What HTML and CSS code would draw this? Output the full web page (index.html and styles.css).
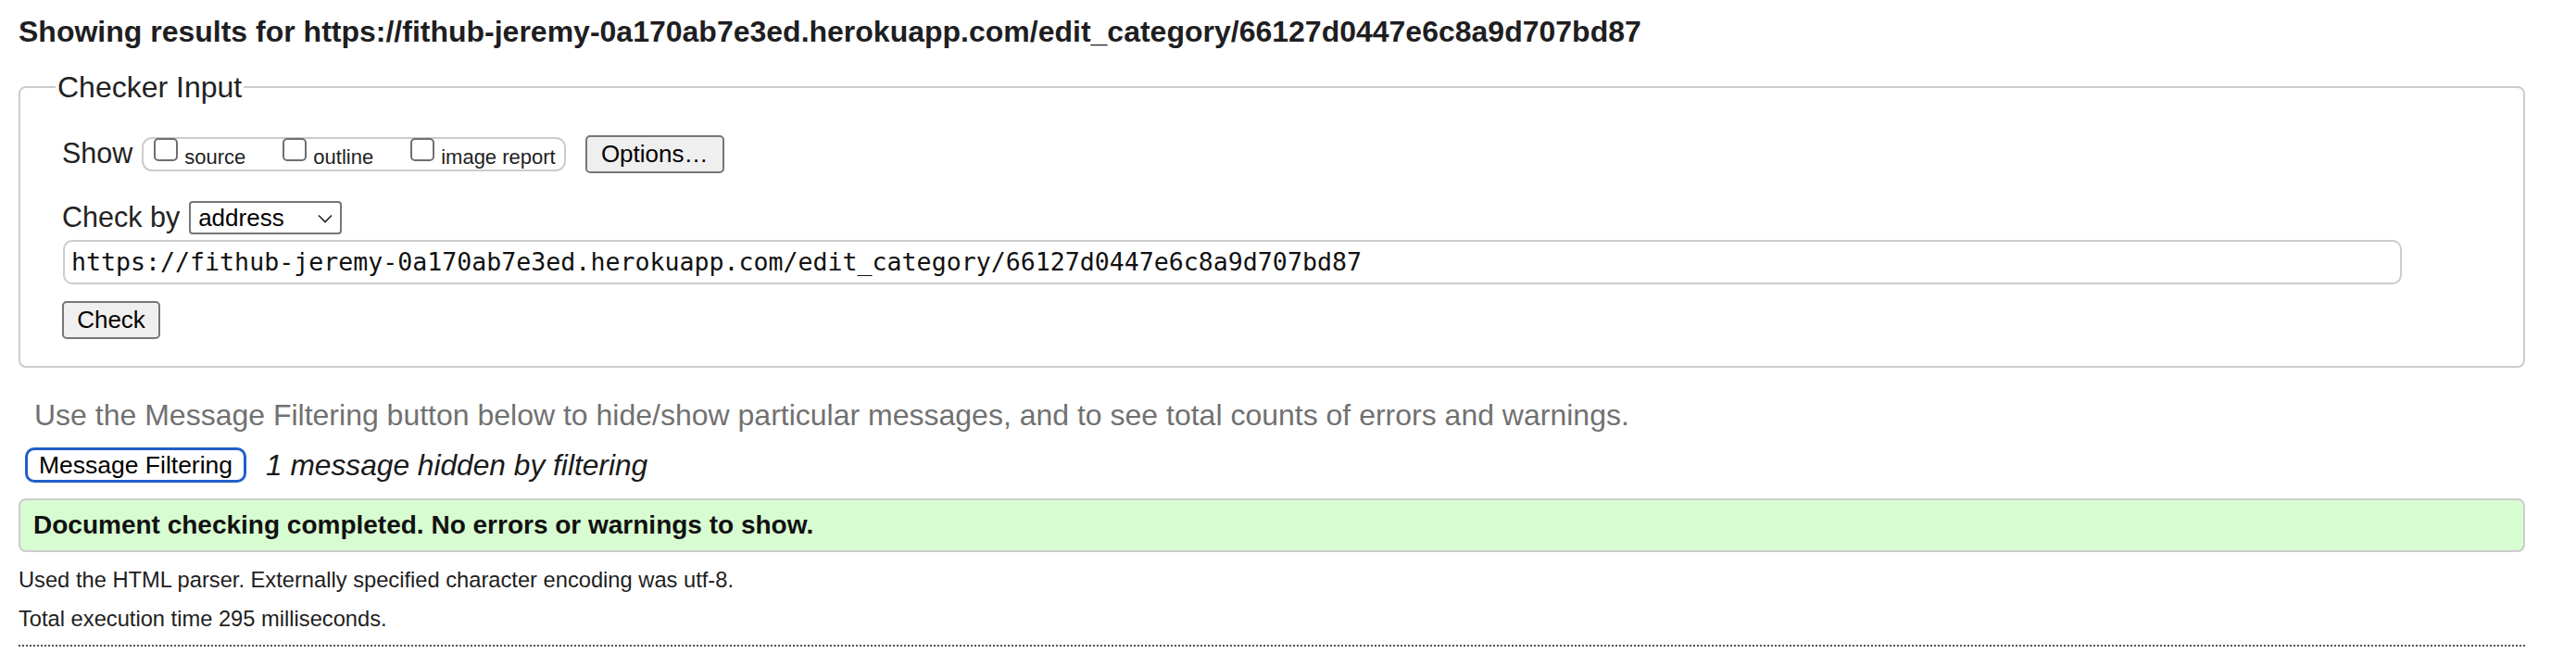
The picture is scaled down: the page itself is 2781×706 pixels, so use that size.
FILE: index.html
```html
<!DOCTYPE html>
<html lang="en">
<head>
<meta charset="utf-8">
<title>Nu Html Checker</title>
<link rel="stylesheet" href="styles.css">
</head>
<body>
<div class="page">
  <h2 class="title">Showing results for https://fithub-jeremy-0a170ab7e3ed.herokuapp.com/edit_category/66127d0447e6c8a9d707bd87</h2>

  <fieldset class="checker">
    <legend class="legend">Checker Input</legend>

    <div class="row show-row">
      <span class="lbl show-lbl">Show</span>
      <div class="pill">
        <label class="opt"><span class="box"></span><span class="opt-text">source</span></label>
        <label class="opt"><span class="box"></span><span class="opt-text">outline</span></label>
        <label class="opt"><span class="box"></span><span class="opt-text">image report</span></label>
      </div>
      <button class="btn options-btn">Options…</button>
    </div>

    <div class="row checkby-row">
      <span class="lbl checkby-lbl">Check by</span>
      <div class="select">
        <span class="select-text">address</span>
        <svg class="chev" width="16" height="10" viewBox="0 0 16 10"><path d="M1 1.5 L8 8.5 L15 1.5" fill="none" stroke="#222" stroke-width="1.6"/></svg>
      </div>
    </div>

    <div class="url">https://fithub-jeremy-0a170ab7e3ed.herokuapp.com/edit_category/66127d0447e6c8a9d707bd87</div>

    <button class="btn check-btn">Check</button>
  </fieldset>

  <p class="hint">Use the Message Filtering button below to hide/show particular messages, and to see total counts of errors and warnings.</p>

  <div class="filter-row">
    <button class="filter-btn">Message Filtering</button>
    <span class="hidden-note">1 message hidden by filtering</span>
  </div>

  <div class="success">Document checking completed. No errors or warnings to show.</div>

  <p class="meta meta-first">Used the HTML parser. Externally specified character encoding was utf-8.</p>
  <p class="meta meta-second">Total execution time 295 milliseconds.</p>
  <div class="dotted"></div>
</div>
</body>
</html>
```

FILE: styles.css
```css
* { box-sizing: border-box; }

html, body {
  margin: 0;
  padding: 0;
  background: #ffffff;
}

body {
  font-family: "Liberation Sans", Arial, sans-serif;
  color: #222222;
}

.page {
  width: 2706px;
  margin-left: 20px;
  padding-top: 16px;
}

.title {
  margin: 0;
  font-size: 32px;
  line-height: 36px;
  font-weight: bold;
  color: #1e1e22;
  white-space: nowrap;
}

.checker {
  margin: 24px 0 0 0;
  border: 2px solid #cccccc;
  border-radius: 8px;
  padding: 0 0 29px 38px;
  min-width: 0;
}

.legend {
  font-size: 32px;
  line-height: 36px;
  padding: 0 2px;
  color: #222;
}

.row {
  display: flex;
  align-items: center;
  margin-left: 7px;
}

.lbl {
  font-size: 30.5px;
  line-height: 34px;
  margin-right: 10px;
  white-space: nowrap;
}

.show-lbl { margin-top: -4px; }
.checkby-lbl { margin-top: -2px; }

.show-row {
  margin-top: 34px;
  height: 41px;
}

.pill {
  display: flex;
  align-items: flex-start;
  height: 37px;
  border: 2px solid #cccccc;
  border-radius: 11px;
  padding: 0 9px 0 11px;
}

.opt {
  display: flex;
  align-items: flex-start;
  margin-right: 40px;
}

.opt:last-child { margin-right: 0; }

.box {
  display: block;
  width: 26px;
  height: 25px;
  border: 2px solid #6e6e6e;
  border-radius: 5px;
  background: #fff;
  margin-top: -1px;
}

.opt-text {
  font-size: 22px;
  line-height: 25px;
  margin-top: 7px;
  margin-left: 7px;
  white-space: nowrap;
}

.btn {
  font-family: "Liberation Sans", Arial, sans-serif;
  font-size: 26px;
  color: #000;
  background: #efefef;
  border: 2px solid #767676;
  border-radius: 5px;
  height: 41px;
  padding: 0;
  line-height: 37px;
}

.options-btn {
  width: 150px;
  margin-left: 21px;
}

.checkby-row {
  margin-top: 30px;
  height: 36px;
}

.select {
  display: flex;
  align-items: center;
  width: 165px;
  height: 36px;
  border: 2px solid #767676;
  border-radius: 4px;
  padding-left: 8px;
  background: #fff;
}

.select-text {
  font-size: 26px;
  line-height: 30px;
  color: #000;
  flex: 1;
}

.chev {
  margin-right: 8px;
  margin-top: 2px;
}

.url {
  margin: 6px 0 0 8px;
  width: 2525px;
  height: 48px;
  border: 2px solid #cccccc;
  border-radius: 10px;
  padding-left: 7px;
  font-family: "DejaVu Sans Mono", "Liberation Mono", monospace;
  font-size: 26.6px;
  line-height: 44px;
  color: #111;
  white-space: nowrap;
}

.check-btn {
  display: block;
  width: 106px;
  margin: 18px 0 0 7px;
}

.hint {
  margin: 33px 0 0 17px;
  font-size: 32px;
  line-height: 36px;
  color: #717171;
  white-space: nowrap;
}

.filter-row {
  display: flex;
  align-items: center;
  margin: 17px 0 0 7px;
}

.filter-btn {
  font-family: "Liberation Sans", Arial, sans-serif;
  font-size: 26.5px;
  color: #000;
  background: #fff;
  width: 239px;
  height: 38px;
  border: 3px solid #1f5fc8;
  border-radius: 10px;
  padding: 0;
  line-height: 32px;
}

.hidden-note {
  margin-left: 21px;
  font-style: italic;
  font-size: 31.7px;
  line-height: 36px;
  color: #1a1a1a;
  white-space: nowrap;
}

.success {
  margin-top: 17px;
  height: 58px;
  background: #d8fcd1;
  border: 2px solid #cccccc;
  border-radius: 8px;
  padding: 11px 14px;
  font-size: 28px;
  line-height: 32px;
  font-weight: bold;
  color: #111;
  white-space: nowrap;
}

.meta {
  margin: 0;
  font-size: 23.7px;
  line-height: 26px;
  color: #1e1e1e;
  white-space: nowrap;
}

.meta-first { margin-top: 17px; }
.meta-second { margin-top: 16px; }

.dotted {
  margin-top: 15px;
  border-top: 2px dotted #555555;
  height: 0;
}
```
